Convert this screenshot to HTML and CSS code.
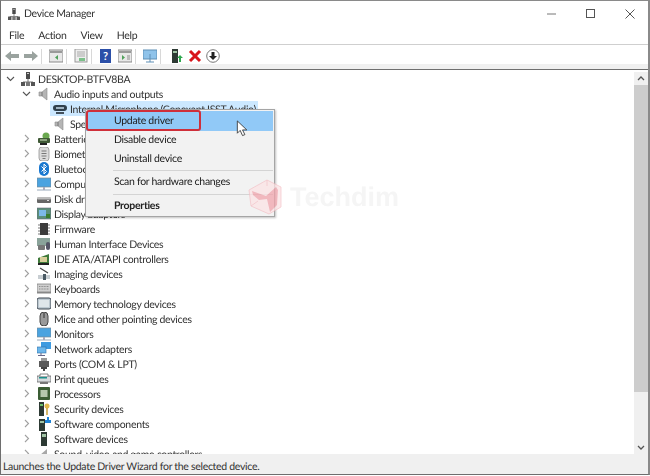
FILE: index.html
```html
<!DOCTYPE html>
<html lang="en">
<head>
    <meta charset="UTF-8">
    <title>Device Manager</title>
    <link rel="stylesheet" href="styles.css">
</head>
<body>
    <svg class="sprite" xmlns="http://www.w3.org/2000/svg">
        <symbol id="pc" viewBox="0 0 14 14"><rect x="5" y="0" width="4" height="7" fill="#4a4a4a"/><rect x="6" y="1" width="2" height="1" fill="#ccc"/><path d="M7 7v3M2 10h10" stroke="#777" fill="none"/><rect x="0" y="10" width="4" height="4" fill="#555"/><rect x="5" y="10" width="4" height="4" fill="#777"/><rect x="10" y="10" width="4" height="4" fill="#555"/></symbol>
        <symbol id="speaker" viewBox="0 0 14 14"><path d="M2 5h3l5-4v12l-5-4H2z" fill="#b5b5b5" stroke="#8a8a8a" stroke-width=".6"/><path d="M5 5v4" stroke="#777"/></symbol>
        <symbol id="mic" viewBox="0 0 14 14"><rect x="0" y="3" width="14" height="6" rx="3" fill="#2f3f4c"/><rect x="3" y="5" width="8" height="2" fill="#9fb3c2"/><rect x="3" y="10" width="8" height="2" fill="#44515c"/></symbol>
        <symbol id="battery" viewBox="0 0 14 14"><circle cx="9" cy="4" r="3.5" fill="#6aa84f"/><rect x="1" y="6" width="12" height="5" rx="1" fill="#3f5a36"/><rect x="3" y="11" width="7" height="2" fill="#222"/><path d="M3 8h7" stroke="#d8e8c8"/></symbol>
        <symbol id="bio" viewBox="0 0 14 14"><rect x="2" y="0" width="10" height="14" rx="3" fill="#dcdcdc" stroke="#888" stroke-width=".7"/><path d="M4.500 4h5M4.500 6.500h5M4.500 9h5M5.500 11.500h3" stroke="#777"/></symbol>
        <symbol id="bluetooth" viewBox="0 0 14 14"><rect x="2" y="0" width="10" height="14" rx="5" fill="#1a78d0"/><path d="M4.500 4.500l5 5L7 12V2l2.500 2.500-5 5" fill="none" stroke="#fff"/></symbol>
        <symbol id="monitor" viewBox="0 0 14 14"><rect x="0" y="1" width="14" height="9" fill="#4ba3e0" stroke="#7a8a96" stroke-width=".7"/><path d="M0 13h14" stroke="#9ab"/><path d="M6 10h2v3H6z" fill="#aab"/></symbol>
        <symbol id="disk" viewBox="0 0 14 14"><rect x="0" y="6" width="14" height="5" rx="1" fill="#666"/><rect x="0" y="5" width="14" height="2.500" rx="1" fill="#bbb"/><rect x="10" y="8" width="2" height="1" fill="#ddd"/></symbol>
        <symbol id="display" viewBox="0 0 14 14"><rect x="0" y="1" width="14" height="11" fill="#5b8f7a" stroke="#667" stroke-width=".6"/><rect x="2" y="3" width="7" height="6" fill="#7cb9e8"/><rect x="9" y="7" width="4" height="4" fill="#3a7d2e"/></symbol>
        <symbol id="firmware" viewBox="0 0 14 14"><rect x="3" y="1" width="8" height="12" fill="#3b3b3b"/><path d="M1 3h2M1 6h2M1 9h2M1 12h2M11 3h2M11 6h2M11 9h2M11 12h2" stroke="#777"/></symbol>
        <symbol id="hid" viewBox="0 0 14 14"><rect x="0" y="1" width="13" height="8" fill="#8aa39a"/><rect x="1" y="8" width="7" height="5" rx="1" fill="#777"/><rect x="9" y="5" width="4" height="8" rx="2" fill="#556"/></symbol>
        <symbol id="ide" viewBox="0 0 14 14"><path d="M1 6l11-4v9H1z" fill="#3f7a3a"/><rect x="3" y="5" width="7" height="5" fill="#d8cf9a"/><rect x="1" y="11" width="11" height="2" fill="#222"/></symbol>
        <symbol id="imaging" viewBox="0 0 14 14"><path d="M3 1l8 5" stroke="#444" stroke-width="1.200"/><rect x="1" y="8" width="12" height="4" fill="#c8ced2"/><rect x="6" y="7" width="3" height="6" fill="#4a5a64"/></symbol>
        <symbol id="keyboard" viewBox="0 0 14 14"><rect x="0" y="2" width="14" height="8" fill="#cfcfcf" stroke="#777" stroke-width=".7"/><path d="M2 4.500h10M2 7h10" stroke="#8c8c8c" stroke-dasharray="1 .6"/><rect x="0" y="10" width="14" height="1.500" fill="#888"/></symbol>
        <symbol id="memory" viewBox="0 0 14 14"><rect x="0" y="1" width="14" height="11" rx="2" fill="#bcc8d0" stroke="#3c4650"/><rect x="2" y="3" width="10" height="7" fill="#dfe6ea"/></symbol>
        <symbol id="mouse" viewBox="0 0 14 14"><rect x="3" y="0" width="8" height="14" rx="4" fill="#9a9a9a" stroke="#444"/><path d="M7 1v5" stroke="#333"/></symbol>
        <symbol id="network" viewBox="0 0 14 14"><rect x="4" y="0" width="10" height="7" fill="#3d9ae0"/><rect x="0" y="5" width="9" height="6" fill="#6cb6ea" stroke="#2c6ea8" stroke-width=".6"/><path d="M4 11v3M1 13.500h7" stroke="#668"/></symbol>
        <symbol id="ports" viewBox="0 0 14 14"><rect x="2" y="4" width="10" height="6" fill="#5a5a5a"/><rect x="4" y="1" width="6" height="3" fill="#999"/><path d="M4 10h6v2H8v2H6v-2H4z" fill="#444"/></symbol>
        <symbol id="print" viewBox="0 0 14 14"><rect x="0" y="4" width="14" height="6" fill="#d6dadd" stroke="#555" stroke-width=".7"/><path d="M3 4V2h8v2" fill="#fff" stroke="#555" stroke-width=".7"/><rect x="2" y="5" width="8" height="1.500" fill="#1f8f8a"/><rect x="3" y="10" width="8" height="2" fill="#777"/></symbol>
        <symbol id="cpu" viewBox="0 0 14 14"><rect x="1" y="0" width="12" height="13" rx="1" fill="#3b5d34"/><rect x="3.500" y="3" width="7" height="7" fill="#b5c7ad"/></symbol>
        <symbol id="security" viewBox="0 0 14 14"><rect x="2" y="0" width="5" height="14" fill="#2d3a34"/><rect x="3" y="2" width="3" height="2" fill="#6abf69"/><circle cx="10" cy="4" r="2.500" fill="#e0b94f"/><path d="M10 6v7" stroke="#c79a2e" stroke-width="1.400"/></symbol>
        <symbol id="softcomp" viewBox="0 0 14 14"><rect x="2" y="2" width="6" height="12" fill="#2d3a34"/><rect x="3" y="4" width="4" height="2" fill="#9fc4a4"/><path d="M8 3h2V0h2v3h2v3H8z" fill="#1f84d6"/></symbol>
        <symbol id="softdev" viewBox="0 0 14 14"><rect x="4" y="0" width="6" height="14" fill="#2d3a34"/><rect x="5" y="2" width="4" height="3" fill="#9fc4a4"/></symbol>
        <symbol id="sound" viewBox="0 0 14 14"><path d="M3 8l7-6v12H3z" fill="#a8a8a8"/></symbol>
        <symbol id="cube" viewBox="0 0 34 36"><path d="M1 11L19 1l14 7v20l-12 7L3 27z" fill="#fbe3e5" stroke="#f3b9bf" stroke-width=".8"/><path d="M4 12l14 5 10-9 2 3-1 15-7 7-3-13-8 1-6-5z" fill="#f0a4ad"/><path d="M19 1v6M3 27l7-5" stroke="#f3b9bf" stroke-width=".8" fill="none"/></symbol>
    </svg>

    <div class="window">
        <div class="titlebar">
            <svg class="title-icon"><use href="#pc"/></svg>
            <span class="title-text">Device Manager</span>
            <div class="window-buttons">
                <svg width="10" height="10" viewBox="0 0 10 10"><path d="M0 5h9" stroke="#777"/></svg>
                <svg width="10" height="10" viewBox="0 0 10 10"><rect x=".5" y=".5" width="8" height="8" fill="none" stroke="#555"/></svg>
                <svg width="10" height="10" viewBox="0 0 10 10"><path d="M.5.500l9 9M9.500.500l-9 9" stroke="#555" fill="none"/></svg>
            </div>
        </div>

        <div class="menubar">
            <span>File</span>
            <span>Action</span>
            <span>View</span>
            <span>Help</span>
        </div>

        <div class="toolbar">
            <div class="tb-group">
                <svg viewBox="0 0 14 14"><path d="M0 7l6-5v3h8v4H6v3z" fill="#9aa39f"/></svg>
                <svg viewBox="0 0 14 14"><path d="M14 7L8 2v3H0v4h8v3z" fill="#9aa39f"/></svg>
            </div>
            <div class="tb-group">
                <svg viewBox="0 0 14 14"><rect x="0" y="1" width="14" height="12" fill="#e8e8e8" stroke="#8a8a8a"/><rect x="1" y="2" width="12" height="2" fill="#9a9a9a"/><path d="M9 6v5L6 8.500z" fill="#4fa05a"/></svg>
            </div>
            <div class="tb-group">
                <svg viewBox="0 0 14 14"><rect x="1" y="0" width="12" height="13" fill="#eee" stroke="#999"/><path d="M3 3h8M3 5h8M3 7h8" stroke="#aaa"/><path d="M5 9h6v3H5z" fill="#7cc08a"/></svg>
            </div>
            <div class="tb-group">
                <svg viewBox="0 0 14 14"><rect x="1" y="0" width="11" height="14" fill="#2b4fa8"/><text x="6.500" y="11" class="help-mark">?</text></svg>
                <svg viewBox="0 0 14 14"><rect x="0" y="1" width="14" height="12" fill="#e8e8e8" stroke="#8a8a8a"/><rect x="1" y="2" width="12" height="2" fill="#9a9a9a"/><path d="M4 6v5l3-2.500z" fill="#4fa05a"/><path d="M9 6v5h3V6z" fill="#bbb"/></svg>
            </div>
            <div class="tb-group">
                <svg viewBox="0 0 14 14"><rect x="0" y="1" width="14" height="9" fill="#8fc3ea" stroke="#5e8fb5"/><path d="M7 5v5M3 13h8M7 10v3" stroke="#5e8fb5" fill="none"/></svg>
            </div>
            <div class="tb-group tb-last">
                <svg viewBox="0 0 14 14"><rect x="2" y="0" width="6" height="14" fill="#2d3a34"/><rect x="3" y="2" width="4" height="2" fill="#9fc4a4"/><path d="M10 6l3 3h-2v4H9V9H7z" fill="#2fa84f"/></svg>
                <svg viewBox="0 0 14 14"><path d="M2 2l10 10M12 2L2 12" stroke="#d8141a" stroke-width="3" fill="none"/></svg>
                <svg viewBox="0 0 14 14"><circle cx="7" cy="7" r="6.300" fill="#fff" stroke="#777"/><path d="M5.500 3h3v4H11l-4 4-4-4h2.500z" fill="#222"/></svg>
            </div>
        </div>

        <div class="content">
            <div class="tree">
                <div class="row level-0"><svg class="arrow open"><path d="M1 3l3.500 3.500L8 3"/></svg><svg class="ico"><use href="#pc"/></svg><span>DESKTOP-BTFV8BA</span></div>
                <div class="row level-1"><svg class="arrow open"><path d="M1 3l3.500 3.500L8 3"/></svg><svg class="ico"><use href="#speaker"/></svg><span>Audio inputs and outputs</span></div>
                <div class="row level-2 selected"><svg class="ico"><use href="#mic"/></svg><span>Internal Microphone (Conexant ISST Audio)</span></div>
                <div class="row level-2"><svg class="ico"><use href="#speaker"/></svg><span>Speakers (Conexant ISST Audio)</span></div>
                <div class="row level-1"><svg class="arrow"><path d="M3 1l3.500 3.500L3 8"/></svg><svg class="ico"><use href="#battery"/></svg><span>Batteries</span></div>
                <div class="row level-1"><svg class="arrow"><path d="M3 1l3.500 3.500L3 8"/></svg><svg class="ico"><use href="#bio"/></svg><span>Biometric devices</span></div>
                <div class="row level-1"><svg class="arrow"><path d="M3 1l3.500 3.500L3 8"/></svg><svg class="ico"><use href="#bluetooth"/></svg><span>Bluetooth</span></div>
                <div class="row level-1"><svg class="arrow"><path d="M3 1l3.500 3.500L3 8"/></svg><svg class="ico"><use href="#monitor"/></svg><span>Computer</span></div>
                <div class="row level-1"><svg class="arrow"><path d="M3 1l3.500 3.500L3 8"/></svg><svg class="ico"><use href="#disk"/></svg><span>Disk drives</span></div>
                <div class="row level-1"><svg class="arrow"><path d="M3 1l3.500 3.500L3 8"/></svg><svg class="ico"><use href="#display"/></svg><span>Display adapters</span></div>
                <div class="row level-1"><svg class="arrow"><path d="M3 1l3.500 3.500L3 8"/></svg><svg class="ico"><use href="#firmware"/></svg><span>Firmware</span></div>
                <div class="row level-1"><svg class="arrow"><path d="M3 1l3.500 3.500L3 8"/></svg><svg class="ico"><use href="#hid"/></svg><span>Human Interface Devices</span></div>
                <div class="row level-1"><svg class="arrow"><path d="M3 1l3.500 3.500L3 8"/></svg><svg class="ico"><use href="#ide"/></svg><span>IDE ATA/ATAPI controllers</span></div>
                <div class="row level-1"><svg class="arrow"><path d="M3 1l3.500 3.500L3 8"/></svg><svg class="ico"><use href="#imaging"/></svg><span>Imaging devices</span></div>
                <div class="row level-1"><svg class="arrow"><path d="M3 1l3.500 3.500L3 8"/></svg><svg class="ico"><use href="#keyboard"/></svg><span>Keyboards</span></div>
                <div class="row level-1"><svg class="arrow"><path d="M3 1l3.500 3.500L3 8"/></svg><svg class="ico"><use href="#memory"/></svg><span>Memory technology devices</span></div>
                <div class="row level-1"><svg class="arrow"><path d="M3 1l3.500 3.500L3 8"/></svg><svg class="ico"><use href="#mouse"/></svg><span>Mice and other pointing devices</span></div>
                <div class="row level-1"><svg class="arrow"><path d="M3 1l3.500 3.500L3 8"/></svg><svg class="ico"><use href="#monitor"/></svg><span>Monitors</span></div>
                <div class="row level-1"><svg class="arrow"><path d="M3 1l3.500 3.500L3 8"/></svg><svg class="ico"><use href="#network"/></svg><span>Network adapters</span></div>
                <div class="row level-1"><svg class="arrow"><path d="M3 1l3.500 3.500L3 8"/></svg><svg class="ico"><use href="#ports"/></svg><span>Ports (COM &amp; LPT)</span></div>
                <div class="row level-1"><svg class="arrow"><path d="M3 1l3.500 3.500L3 8"/></svg><svg class="ico"><use href="#print"/></svg><span>Print queues</span></div>
                <div class="row level-1"><svg class="arrow"><path d="M3 1l3.500 3.500L3 8"/></svg><svg class="ico"><use href="#cpu"/></svg><span>Processors</span></div>
                <div class="row level-1"><svg class="arrow"><path d="M3 1l3.500 3.500L3 8"/></svg><svg class="ico"><use href="#security"/></svg><span>Security devices</span></div>
                <div class="row level-1"><svg class="arrow"><path d="M3 1l3.500 3.500L3 8"/></svg><svg class="ico"><use href="#softcomp"/></svg><span>Software components</span></div>
                <div class="row level-1"><svg class="arrow"><path d="M3 1l3.500 3.500L3 8"/></svg><svg class="ico"><use href="#softdev"/></svg><span>Software devices</span></div>
                <div class="row level-1"><svg class="arrow"><path d="M3 1l3.500 3.500L3 8"/></svg><svg class="ico"><use href="#sound"/></svg><span>Sound, video and game controllers</span></div>
            </div>
            <div class="scrollbar">
                <svg class="scroll-btn" viewBox="0 0 14 13"><path d="M4 8l3-3 3 3" /></svg>
                <div class="scroll-track"><div class="scroll-thumb"></div></div>
                <svg class="scroll-btn" viewBox="0 0 14 13"><path d="M4 5l3 3 3-3" /></svg>
            </div>
        </div>

        <div class="statusbar">Launches the Update Driver Wizard for the selected device.</div>
    </div>

    <!-- right click menu -->
    <div class="context-menu">
        <div class="menu-item active">Update driver</div>
        <div class="menu-item">Disable device</div>
        <div class="menu-item">Uninstall device</div>
        <div class="menu-sep"></div>
        <div class="menu-item">Scan for hardware changes</div>
        <div class="menu-sep"></div>
        <div class="menu-item bold">Properties</div>
        <div class="red-mark"></div>
    </div>

    <svg class="pointer" viewBox="0 0 14 18"><path d="M1 1v13l3-3 2.500 5.500 2.500-1L6.500 10.500H11z" fill="#fff" stroke="#333" stroke-width=".9"/></svg>

    <div class="watermark">
        <svg class="cube"><use href="#cube"/></svg>
        <span>Techdim</span>
    </div>
</body>
</html>
```

FILE: styles.css
```css
body {
    margin: 0;
    width: 650px;
    height: 476px;
    overflow: hidden;
    position: relative;
    background-color: #fff;
    font-family: Lato, "Open Sans", sans-serif;
    font-size: 10.5px;
    letter-spacing: -0.3px;
    text-rendering: geometricPrecision;
    color: #333;
    filter: blur(0.3px);
}
.sprite {
    display: none;
}
.window {
    box-sizing: border-box;
    height: 475px;
    display: flex;
    flex-direction: column;
    border-top: 1px solid #8a8a8a;
    border-left: 1px solid #6e6e6e;
    border-right: 2px solid #8a8a8a;
    border-bottom: 1px solid #6e6e6e;
}

/* title bar */
.titlebar {
    height: 26px;
    margin-bottom: 2px;
    display: flex;
    align-items: center;
    padding-left: 7px;
    flex-shrink: 0;
}
.title-icon {
    width: 12px;
    height: 12px;
}
.title-text {
    margin-left: 4px;
}
.window-buttons {
    margin-left: auto;
    display: flex;
    gap: 29px;
    padding-right: 13px;
}

/* menu */
.menubar {
    height: 14px;
    padding-bottom: 1px;
    display: flex;
    align-items: center;
    gap: 14px;
    padding-left: 8px;
    border-bottom: 1px solid #cfcfcf;
    flex-shrink: 0;
}

/* toolbar */
.toolbar {
    height: 25px;
    box-sizing: border-box;
    display: flex;
    align-items: flex-start;
    padding-top: 4px;
    padding-left: 4px;
    background: linear-gradient(#fff 19px, #f0f0f0 19px);
    border-bottom: 1px solid #6f6f6f;
    flex-shrink: 0;
}
.tb-group {
    display: flex;
    gap: 5px;
    padding: 0 3px 0 7px;
    height: 15px;
    border-right: 1px solid #d8d8d8;
}
.tb-group:first-child {
    padding-left: 0;
}
.tb-group svg {
    width: 14px;
    height: 14px;
}
.tb-last {
    border-right: none;
    margin-left: 2px;
    gap: 4px;
}
.help-mark {
    font-size: 11px;
    font-weight: bold;
    fill: #fff;
    text-anchor: middle;
}

/* tree */
.content {
    flex: 1;
    display: flex;
    min-height: 0;
}
.tree {
    flex: 1;
    overflow: hidden;
    padding-top: 1px;
}
.row {
    height: 15px;
    display: flex;
    align-items: center;
    white-space: nowrap;
}
.row span {
    margin-top: 2px;
}
.level-0 {
    padding-left: 5px;
}
.level-1 {
    padding-left: 21px;
}
.level-2 {
    padding-left: 52px;
}
.selected {
    background: linear-gradient(#cce8ff, #cce8ff) no-repeat 49px 0 / 208px 15px;
}
.arrow {
    width: 9px;
    height: 9px;
    margin-right: 6px;
    flex-shrink: 0;
    fill: none;
    stroke: #a0a0a0;
    stroke-width: 1.100;
}
.arrow.open {
    stroke: #555;
}
.ico {
    width: 14px;
    height: 14px;
    margin-right: 3px;
    flex-shrink: 0;
}

/* scrollbar */
.scrollbar {
    width: 14px;
    margin-top: 2px;
    display: flex;
    flex-direction: column;
    background-color: #f0f0f0;
    flex-shrink: 0;
}
.scroll-btn {
    width: 14px;
    height: 13px;
    flex-shrink: 0;
    fill: none;
    stroke: #555;
    stroke-width: 1.300;
}
.scroll-track {
    flex: 1;
}
.scroll-thumb {
    height: 307px;
    background-color: #cdcdcd;
}

/* status bar */
.statusbar {
    height: 20px;
    line-height: 26px;
    padding-left: 2px;
    background-color: #f0f0f0;
    flex-shrink: 0;
    white-space: nowrap;
}

/* context menu */
.context-menu {
    position: absolute;
    left: 85px;
    top: 109px;
    width: 190px;
    height: 108px;
    box-sizing: border-box;
    padding-top: 1px;
    background-color: #f2f2f2;
    border: 1px solid #a5a5a5;
    box-shadow: 1px 1px 2px rgba(0, 0, 0, 0.25);
    color: #222;
}
.menu-item {
    height: 18.500px;
    line-height: 18.500px;
    padding-left: 28px;
    margin-right: 1px;
}
.menu-item.active {
    background-color: #91c9f7;
    height: 20px;
    line-height: 20px;
}
.bold {
    font-weight: bold;
}
.menu-sep {
    height: 1px;
    margin: 2px 1px 2px 27px;
    background-color: #d4d4d4;
}
.red-mark {
    position: absolute;
    left: 0;
    top: 0;
    width: 115px;
    height: 21px;
    box-sizing: border-box;
    border: 2px solid #cf2f3a;
    border-radius: 3px;
}

/* cursor */
.pointer {
    position: absolute;
    left: 236px;
    top: 120px;
    width: 14px;
    height: 17px;
}

/* watermark */
.watermark {
    position: absolute;
    left: 248px;
    top: 179px;
    display: flex;
    align-items: center;
    gap: 8px;
}
.cube {
    width: 34px;
    height: 36px;
    opacity: 0.75;
}
.watermark span {
    font-family: "Liberation Sans", sans-serif;
    font-size: 27px;
    font-weight: bold;
    letter-spacing: 0;
    color: #f5f5f5;
}
```
